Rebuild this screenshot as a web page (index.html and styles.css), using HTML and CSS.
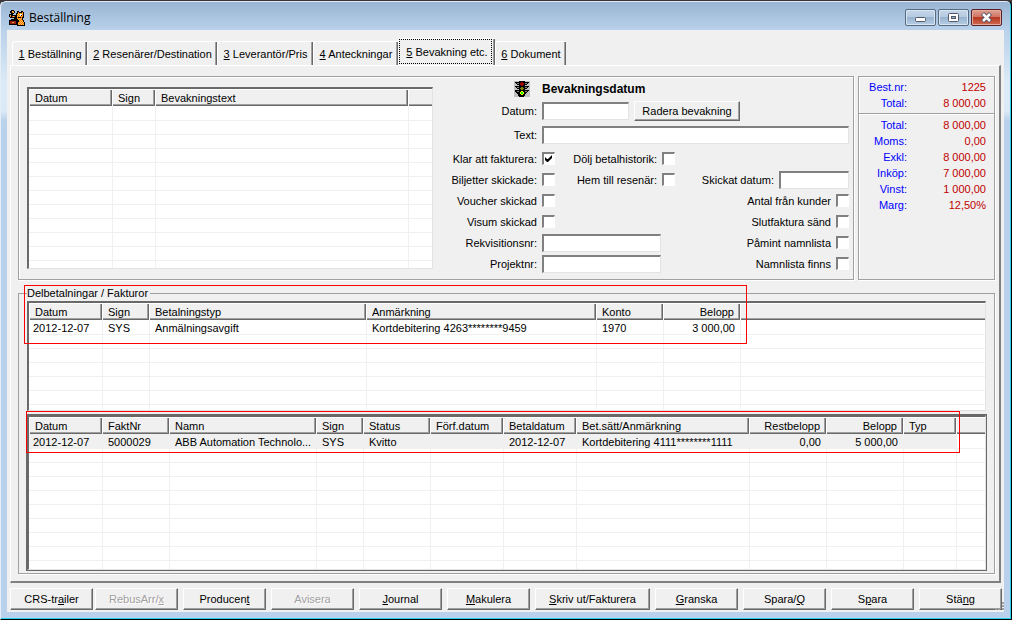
FILE: index.html
```html
<!DOCTYPE html>
<html lang="sv">
	<head>
		<meta charset="UTF-8">
		<title>Beställning</title>
		<link rel="stylesheet" href="styles.css">
	</head>
	<body>
		<div class="window">
			<header class="titlebar">
				<svg class="app-icon" viewBox="0 0 16 16" shape-rendering="crispEdges">
					<defs>
						<pattern id="check" width="2" height="2" patternUnits="userSpaceOnUse">
							<path fill="#f06018" d="M0 0h2v2H0z"/>
							<path fill="#ffd030" d="M0 0h1v1H0zM1 1h1v1H1z"/>
						</pattern>
					</defs>
					<path fill="#000" d="M2 0h3v1h1v2H5v1H4v1h3V3h1V1h2v1h2V1h2v1h1v6h-1v2h1v2h1v4H8v-1H0v-5h2V9h3V8H1V7H0V4h2V3H1V1h1z"/>
					<path fill="url(#check)" d="M3 1h2v2H3zM1 5h1v2H1zM3 6h3v1H3zM9 2h1v1h3V2h1v5h-1v3h1v2h1v3H9v-3h1v-2H9V9H8V4h1z"/>
					<path fill="#fff" d="M11 4h2v2h-2z"/>
					<path fill="#000" d="M12 5h1v1h-1zM9 7h3v1H9z"/>
					<path fill="#a02010" d="M1 11h6v3H1z"/>
					<path fill="#c8a838" d="M3 12h2v1H3z"/>
				</svg>
				<h1>Beställning</h1>
				<div class="winbtns">
					<button type="button" aria-label="Minimera"><svg viewBox="0 0 29 15"><rect x="9.500" y="7.500" width="10" height="4" rx="1" fill="#fff" stroke="#535666"/></svg></button>
					<button type="button" aria-label="Maximera"><svg viewBox="0 0 29 15"><rect x="9.500" y="3.500" width="10" height="8" rx="1" fill="#fff" stroke="#535666"/><rect x="12.500" y="6.500" width="4" height="2" fill="#8fb0d0" stroke="#535666"/></svg></button>
					<button type="button" class="close" aria-label="Stäng fönster"><svg viewBox="0 0 29 15"><path d="M10.500 3.500L18.500 11.500M18.500 3.500L10.500 11.500" stroke="#535666" stroke-width="4.500"/><path d="M11 4L18 11M18 4L11 11" stroke="#fff" stroke-width="2.500"/></svg></button>
				</div>
			</header>
			<main class="client">
				<div class="tabs" role="tablist">
					<button type="button" role="tab"><u>1</u> Beställning</button>
					<button type="button" role="tab"><u>2</u> Resenärer/Destination</button>
					<button type="button" role="tab"><u>3</u> Leverantör/Pris</button>
					<button type="button" role="tab"><u>4</u> Anteckningar</button>
					<button type="button" role="tab" class="ac" aria-selected="true"><span><u>5</u> Bevakning etc.</span></button>
					<button type="button" role="tab"><u>6</u> Dokument</button>
				</div>
				<div class="panel">
					<div class="top">
						<section class="group watch">
							<div class="list">
								<table>
									<colgroup><col style="width:83px"><col style="width:43px"><col style="width:253px"><col></colgroup>
									<thead><tr><th>Datum</th><th>Sign</th><th>Bevakningstext</th><th></th></tr></thead>
									<tbody class="rows" data-rows="12" data-cols="4"></tbody>
								</table>
							</div>
							<form class="form">
								<div class="line head">
									<svg class="light" viewBox="0 0 16 16" shape-rendering="crispEdges">
										<path fill="#c0c0c0" d="M0 0h16v16H0z"/>
										<path fill="#000" d="M5 0h6v1h4v1h-1v1h-1v1h-2v1h4v1h-1v1h-1v1h-2v1h4v1h-1v1h-1v1h-1v1h-1v2h-1v1H5v-1H4v-2H3v-1H2v-1H1V9h4V8H3V7H2V6H1V5h4V4H3V3H2V2H1V1h4z"/>
										<path fill="#808080" d="M3 2h2v1H3zM11 2h2v1h-2zM3 6h2v1H3zM11 6h2v1h-2zM3 10h2v1H3zM11 10h2v1h-2z"/>
										<path fill="#a00000" d="M7 1h2v1h1v2H9v1H7V4H6V2h1z"/>
										<path fill="#808000" d="M7 6h2v1h1v1H9v1H7V8H6V7h1z"/>
										<path fill="#ff0" d="M7 10h2v1h1v2H9v1H7v-1H6v-2h1z"/>
										<path fill="#0f0" d="M7 11h2v2H7z"/>
									</svg>
									<h2>Bevakningsdatum</h2>
								</div>
								<div class="line">
									<label for="datum">Datum:</label>
									<input type="text" id="datum" class="date">
									<button type="button" class="btn clear">Radera bevakning</button>
								</div>
								<div class="line">
									<label for="text">Text:</label>
									<input type="text" id="text" class="long">
								</div>
								<div class="checks">
									<label for="c1">Klar att fakturera:</label><input type="checkbox" id="c1" checked>
									<label for="c2">Dölj betalhistorik:</label><input type="checkbox" id="c2">
									<div class="end"></div>

									<label for="c3">Biljetter skickade:</label><input type="checkbox" id="c3">
									<label for="c4">Hem till resenär:</label><input type="checkbox" id="c4">
									<div class="end"><label for="skickat">Skickat datum:</label><input type="text" id="skickat" class="sent"></div>

									<label for="c5">Voucher skickad</label><input type="checkbox" id="c5">
									<div class="end"><label for="c6">Antal från kunder</label><input type="checkbox" id="c6"></div>

									<label for="c7">Visum skickad</label><input type="checkbox" id="c7">
									<div class="end"><label for="c8">Slutfaktura sänd</label><input type="checkbox" id="c8"></div>

									<label for="rekv">Rekvisitionsnr:</label><input type="text" id="rekv" class="ref">
									<div class="end"><label for="c9">Påmint namnlista</label><input type="checkbox" id="c9"></div>

									<label for="proj">Projektnr:</label><input type="text" id="proj" class="ref">
									<div class="end"><label for="c10">Namnlista finns</label><input type="checkbox" id="c10"></div>
								</div>
							</form>
						</section>
						<section class="group totals">
							<dl>
								<dt>Best.nr:</dt><dd>1225</dd>
								<dt>Total:</dt><dd>8 000,00</dd>
							</dl>
							<dl>
								<dt>Total:</dt><dd>8 000,00</dd>
								<dt>Moms:</dt><dd>0,00</dd>
								<dt>Exkl:</dt><dd>8 000,00</dd>
								<dt>Inköp:</dt><dd>7 000,00</dd>
								<dt>Vinst:</dt><dd>1 000,00</dd>
								<dt>Marg:</dt><dd>12,50%</dd>
							</dl>
						</section>
					</div>
					<fieldset class="payments">
						<legend>Delbetalningar / Fakturor</legend>
						<div class="list parts">
							<table>
								<colgroup><col style="width:73px"><col style="width:47px"><col style="width:217px"><col style="width:230px"><col style="width:67px"><col style="width:77px"><col></colgroup>
								<thead><tr><th>Datum</th><th>Sign</th><th>Betalningstyp</th><th>Anmärkning</th><th>Konto</th><th class="num">Belopp</th><th></th></tr></thead>
								<tbody class="rows" data-rows="7" data-cols="7">
									<tr><td>2012-12-07</td><td>SYS</td><td>Anmälningsavgift</td><td>Kortdebitering 4263********9459</td><td>1970</td><td class="num">3 000,00</td><td></td></tr>
								</tbody>
							</table>
						</div>
						<div class="list invoices">
							<table>
								<colgroup><col style="width:73px"><col style="width:67px"><col style="width:147px"><col style="width:47px"><col style="width:67px"><col style="width:73px"><col style="width:73px"><col style="width:173px"><col style="width:77px"><col style="width:77px"><col style="width:53px"><col></colgroup>
								<thead><tr><th>Datum</th><th>FaktNr</th><th>Namn</th><th>Sign</th><th>Status</th><th>Förf.datum</th><th>Betaldatum</th><th>Bet.sätt/Anmärkning</th><th class="num">Restbelopp</th><th class="num">Belopp</th><th>Typ</th><th></th></tr></thead>
								<tbody class="rows" data-rows="10" data-cols="12">
									<tr class="sel"><td>2012-12-07</td><td>5000029</td><td>ABB Automation Technolo...</td><td>SYS</td><td>Kvitto</td><td></td><td>2012-12-07</td><td>Kortdebitering 4111********1111</td><td class="num">0,00</td><td class="num">5 000,00</td><td></td><td></td></tr>
								</tbody>
							</table>
						</div>
						<div class="mark mark1"></div>
						<div class="mark mark2"></div>
					</fieldset>
				</div>
				<footer class="actions">
					<button type="button" class="btn">CRS-tr<u>a</u>iler</button>
					<button type="button" class="btn" disabled>RebusArr/<u>x</u></button>
					<button type="button" class="btn">Producen<u>t</u></button>
					<button type="button" class="btn" disabled>Avisera</button>
					<button type="button" class="btn"><u>J</u>ournal</button>
					<button type="button" class="btn"><u>M</u>akulera</button>
					<button type="button" class="btn wide"><u>S</u>kriv ut/Fakturera</button>
					<button type="button" class="btn"><u>G</u>ranska</button>
					<button type="button" class="btn">Spara/<u>Q</u></button>
					<button type="button" class="btn">S<u>p</u>ara</button>
					<button type="button" class="btn">Stä<u>n</u>g</button>
					<svg class="grip" viewBox="0 0 9 9" shape-rendering="crispEdges"><path fill="#a0a0a0" d="M7 0h2v2H7zM7 3h2v2H7zM3 6h2v2H3zM7 6h2v2H7zM0 6h2v2H0z"/></svg>
				</footer>
			</main>
		</div>
		<script src="script.js"></script>
	</body>
</html>
```

FILE: styles.css
```css
* {
	margin: 0;
	padding: 0;
	box-sizing: border-box;
}
body {
	font: 11px/14px "Liberation Sans", Arial, sans-serif;
	color: #000;
	background: #3a3437;
}
button, input {
	font: inherit;
	color: inherit;
}
.window {
	display: flex;
	flex-direction: column;
	min-height: 100vh;
	padding: 0 7px 7px 6px;
	border: 1px solid #000;
	border-top-color: #3a3437;
	border-left-color: #e4eef8;
	border-radius: 6px 6px 0 0;
	background: linear-gradient(#98b4d2, #b9d1ea 29px, #dce9f6 80px, #dce9f6 110px, #b9d1ea 120px);
	box-shadow: inset -1px -1px #26d3ec, inset 0 1px #dfeaf5;
}
.titlebar {
	display: flex;
	align-items: center;
	height: 29px;
	padding: 4px 2px 0;
}
.app-icon {
	width: 16px;
	height: 16px;
}
.titlebar h1 {
	flex: 1;
	margin-left: 4px;
	font: 12px/18px "Open Sans", "Noto Sans", sans-serif;
}
.winbtns {
	display: flex;
	gap: 2px;
}
.winbtns button {
	width: 31px;
	height: 17px;
	border: 1px solid #566a80;
	border-radius: 2px;
	background: linear-gradient(#c5d6e8, #b4cae1 48%, #98b4d0 50%, #b7cde3);
	box-shadow: inset 0 0 0 1px #d8e5f2;
}
.winbtns svg {
	display: block;
	width: 29px;
	height: 15px;
}
.winbtns .close {
	border-color: #5a2028;
	background: linear-gradient(#dfa193, #cf7361 48%, #b83922 50%, #cf6b50);
	box-shadow: inset 0 0 0 1px #e3aa9d;
}
.client {
	flex: 1;
	display: flex;
	flex-direction: column;
	padding: 8px 3px 2px;
	background: #f0f0f0;
}

/* tabs */
.tabs {
	display: grid;
	grid-template-columns: 75px 130px 96px 85px 97px 71px;
	align-items: end;
	height: 27px;
	padding-left: 2px;
}
.tabs button {
	height: 24px;
	border: solid #fff;
	border-width: 1px 0 0 1px;
	border-radius: 3px 1px 0 0;
	background: #f0f0f0;
	box-shadow: inset -1px 0 #696969, inset -2px 0 #a0a0a0;
	white-space: nowrap;
}
.tabs .ac {
	height: 27px;
	padding: 0 3px 2px 0;
}
.tabs .ac span {
	display: block;
	padding: 5px 0 4px 3px;
	border: 1px dotted #000;
}
.panel {
	flex: 1;
	display: flex;
	flex-direction: column;
	padding: 10px 4px 7px 7px;
	border: solid;
	border-width: 1px 2px 2px 1px;
	border-color: #fff #808080 #808080 #fff;
}
.top {
	display: flex;
	gap: 4px;
}
.group {
	border: 1px solid #a0a0a0;
	box-shadow: inset 1px 1px #fff, 1px 1px #fff;
}
.watch {
	flex: 1;
	display: flex;
	justify-content: space-between;
	height: 204px;
	padding: 0 4px 0 8px;
}

/* lists */
.list {
	overflow: hidden;
	border: solid;
	border-width: 2px 1px 1px 2px;
	border-color: #696969 #e3e3e3 #e3e3e3 #696969;
	background: #fff;
}
.watch .list {
	width: 406px;
	margin: 10px 0;
}
table {
	width: 100%;
	table-layout: fixed;
	border-collapse: separate;
	border-spacing: 0;
}
th {
	height: 17px;
	padding: 1px 6px 0;
	background: #f0f0f0;
	border-top: 1px solid #fff;
	box-shadow: inset 1px 0 #fff, inset -1px -1px #696969, inset -2px -2px #a0a0a0;
	font-weight: normal;
	line-height: 13px;
	text-align: left;
	white-space: nowrap;
}
th:last-child {
	box-shadow: inset 1px 0 #fff, inset 0 -1px #696969, inset 0 -2px #a0a0a0;
}
td {
	height: 14px;
	padding: 0 5px;
	border-bottom: 1px solid #f0f0f0;
	line-height: 12px;
	white-space: nowrap;
}
tr:first-child td {
	height: 15px;
	padding-top: 2px;
}
td:first-child {
	padding-left: 4px;
}
td + td {
	border-left: 1px solid #f0f0f0;
}
.num {
	text-align: right;
}
.sel td {
	background: #f0f0f0;
}
.sel td:last-child {
	background: #fff;
}

/* form */
.form {
	width: 409px;
	padding-top: 2px;
}
.form label {
	text-align: right;
	white-space: nowrap;
}
.line {
	display: flex;
	align-items: center;
	gap: 5px;
	height: 24px;
}
.line label {
	width: 97px;
}
.head {
	height: 20px;
	gap: 12px;
	padding-left: 74px;
}
.head h2 {
	font-size: 12px;
}
.light {
	width: 16px;
	height: 16px;
}
input[type=text] {
	height: 18px;
	padding: 0 2px;
	border: solid;
	border-width: 2px 1px 1px 2px;
	border-color: #808080 #e3e3e3 #e3e3e3 #808080;
	background: #fff;
}
input.date {
	width: 87px;
}
input.long {
	flex: 1;
}
input.ref {
	grid-column: 2 / 5;
	width: 119px;
}
input.sent {
	width: 70px;
}
.checks {
	display: grid;
	grid-template-columns: 97px 13px 97px 13px 1fr;
	grid-auto-rows: 21px;
	align-items: center;
	column-gap: 5px;
	margin-top: 1px;
}
.end {
	grid-column: 5;
	display: flex;
	align-items: center;
	justify-content: flex-end;
	gap: 5px;
}
input[type=checkbox] {
	appearance: none;
	width: 13px;
	height: 13px;
	border: solid;
	border-width: 2px 1px 1px 2px;
	border-color: #808080 #fff #fff #808080;
	background: #fff;
}
input[type=checkbox]:checked::before {
	content: "";
	display: block;
	width: 7px;
	height: 7px;
	margin: 1px;
	background: #000;
	clip-path: polygon(0 2px, 2px 4px, 3px 4px, 7px 0, 7px 3px, 3px 7px, 2px 7px, 0 5px);
}
.btn {
	height: 22px;
	border: solid 1px;
	border-color: #fff #696969 #696969 #fff;
	background: #f0f0f0;
	box-shadow: inset -1px -1px #a0a0a0;
	white-space: nowrap;
}
.btn:disabled {
	color: #a0a0a0;
	text-shadow: 1px 1px #fff;
}
.clear {
	width: 106px;
	height: 20px;
}

/* totals */
.totals {
	width: 137px;
}
.totals dl {
	display: grid;
	grid-template-columns: 48px 1fr;
	padding: 2px 8px 2px 0;
	line-height: 16px;
	text-align: right;
}
.totals dl + dl {
	padding-top: 3px;
	border-top: 1px solid #a0a0a0;
	box-shadow: inset 0 1px #fff;
}
.totals dt {
	color: #00f;
}
.totals dd {
	color: #c00000;
}

/* payments */
.payments {
	position: relative;
	flex: 1;
	display: flex;
	flex-direction: column;
	gap: 4px;
	margin-top: 6px;
	padding: 1px 8px 3px;
	border: 1px solid #a0a0a0;
	box-shadow: 1px 1px #fff;
}
.payments legend {
	padding-right: 2px;
}
.parts {
	height: 110px;
}
.invoices {
	height: 155px;
	box-shadow: 0 0 0 1px #696969;
}
.mark {
	position: absolute;
	border: 1px solid #f00;
}
.mark1 {
	left: 5px;
	top: -15px;
	width: 723px;
	height: 59px;
}
.mark2 {
	left: 7px;
	top: 111px;
	width: 934px;
	height: 42px;
}

/* buttons */
.actions {
	position: relative;
	display: flex;
	gap: 5px;
	margin-right: -1px;
	padding-top: 5px;
}
.actions .btn {
	flex: 1 1 83px;
}
.actions .wide {
	flex-basis: 115px;
}
.actions .btn:first-child {
	margin-right: -3px;
}
.grip {
	position: absolute;
	right: -2px;
	bottom: -1px;
	width: 9px;
	height: 9px;
}
```

FILE: script.js
```js
// pad every list with blank rows so the grid lines reach the bottom
document.querySelectorAll(".rows").forEach(function (body) {
	while (body.rows.length < body.dataset.rows) {
		var row = body.insertRow();
		for (var i = 0; i < body.dataset.cols; i++) {
			row.insertCell();
		}
	}
});
```
